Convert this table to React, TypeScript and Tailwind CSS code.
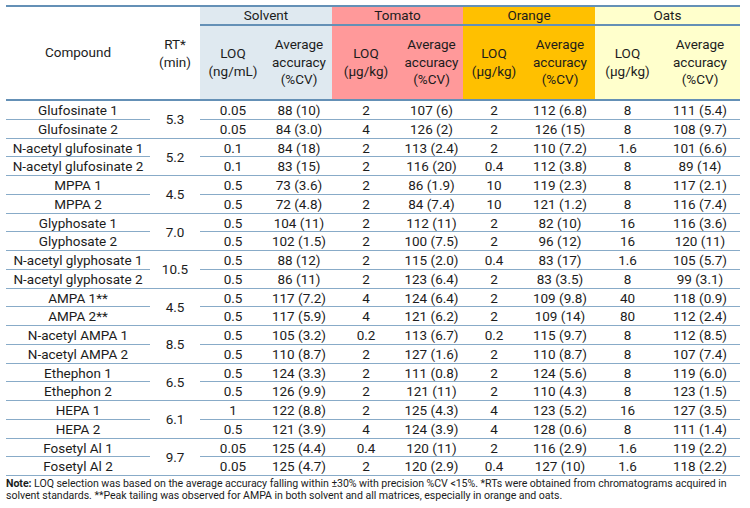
const groups = [
  { name: 'Solvent', bg: 'bg-[#dfe9f0]', loq: '(ng/mL)', w: ['w-[66px]', 'w-[66px]'] },
  { name: 'Tomato', bg: 'bg-[#ff999a]', loq: '(µg/kg)', w: ['w-[68px]', 'w-[63px]'] },
  { name: 'Orange', bg: 'bg-[#ffc000]', loq: '(µg/kg)', w: ['w-[62px]', 'w-[70px]'] },
  { name: 'Oats', bg: 'bg-[#ffffcc]', loq: '(µg/kg)', w: ['w-[65px]', 'w-[80px]'] },
];

const colW = ['w-[66px]', 'w-[66px]', 'w-[68px]', 'w-[63px]', 'w-[62px]', 'w-[70px]', 'w-[65px]', 'w-[80px]'];

type Row = [string, ...string[]];

const pairs: { rt: string; rows: [Row, Row] }[] = [
  { rt: '5.3', rows: [
    ['Glufosinate 1', '0.05', '88 (10)', '2', '107 (6)', '2', '112 (6.8)', '8', '111 (5.4)'],
    ['Glufosinate 2', '0.05', '84 (3.0)', '4', '126 (2)', '2', '126 (15)', '8', '108 (9.7)'],
  ] },
  { rt: '5.2', rows: [
    ['N-acetyl glufosinate 1', '0.1', '84 (18)', '2', '113 (2.4)', '2', '110 (7.2)', '1.6', '101 (6.6)'],
    ['N-acetyl glufosinate 2', '0.1', '83 (15)', '2', '116 (20)', '0.4', '112 (3.8)', '8', '89 (14)'],
  ] },
  { rt: '4.5', rows: [
    ['MPPA 1', '0.5', '73 (3.6)', '2', '86 (1.9)', '10', '119 (2.3)', '8', '117 (2.1)'],
    ['MPPA 2', '0.5', '72 (4.8)', '2', '84 (7.4)', '10', '121 (1.2)', '8', '116 (7.4)'],
  ] },
  { rt: '7.0', rows: [
    ['Glyphosate 1', '0.5', '104 (11)', '2', '112 (11)', '2', '82 (10)', '16', '116 (3.6)'],
    ['Glyphosate 2', '0.5', '102 (1.5)', '2', '100 (7.5)', '2', '96 (12)', '16', '120 (11)'],
  ] },
  { rt: '10.5', rows: [
    ['N-acetyl glyphosate 1', '0.5', '88 (12)', '2', '115 (2.0)', '0.4', '83 (17)', '1.6', '105 (5.7)'],
    ['N-acetyl glyphosate 2', '0.5', '86 (11)', '2', '123 (6.4)', '2', '83 (3.5)', '8', '99 (3.1)'],
  ] },
  { rt: '4.5', rows: [
    ['AMPA 1**', '0.5', '117 (7.2)', '4', '124 (6.4)', '2', '109 (9.8)', '40', '118 (0.9)'],
    ['AMPA 2**', '0.5', '117 (5.9)', '4', '121 (6.2)', '2', '109 (14)', '80', '112 (2.4)'],
  ] },
  { rt: '8.5', rows: [
    ['N-acetyl AMPA 1', '0.5', '105 (3.2)', '0.2', '113 (6.7)', '0.2', '115 (9.7)', '8', '112 (8.5)'],
    ['N-acetyl AMPA 2', '0.5', '110 (8.7)', '2', '127 (1.6)', '2', '110 (8.7)', '8', '107 (7.4)'],
  ] },
  { rt: '6.5', rows: [
    ['Ethephon 1', '0.5', '124 (3.3)', '2', '111 (0.8)', '2', '124 (5.6)', '8', '119 (6.0)'],
    ['Ethephon 2', '0.5', '126 (9.9)', '2', '121 (11)', '2', '110 (4.3)', '8', '123 (1.5)'],
  ] },
  { rt: '6.1', rows: [
    ['HEPA 1', '1', '122 (8.8)', '2', '125 (4.3)', '4', '123 (5.2)', '16', '127 (3.5)'],
    ['HEPA 2', '0.5', '121 (3.9)', '4', '124 (3.9)', '4', '128 (0.6)', '8', '111 (1.4)'],
  ] },
  { rt: '9.7', rows: [
    ['Fosetyl Al 1', '0.05', '125 (4.4)', '0.4', '120 (11)', '2', '116 (2.9)', '1.6', '119 (2.2)'],
    ['Fosetyl Al 2', '0.05', '125 (4.7)', '2', '120 (2.9)', '0.4', '127 (10)', '1.6', '118 (2.2)'],
  ] },
];

export default function App() {
  return (
    <div className="w-[750px] h-[508px] bg-white pt-[5px] pl-[6px] text-[#1c1c1c] font-['Roboto',sans-serif]">
      <div className="w-[734px] border-t-2 border-[#6490b6]">
        {/* header */}
        <div className="flex border-b-2 border-[#6490b6] text-[13.5px] leading-[17.5px]">
          <div className="w-[144px] flex items-center justify-center">Compound</div>
          <div className="w-[50px] flex flex-col items-center justify-center leading-[18px]">
            <span>RT*</span>
            <span>(min)</span>
          </div>
          {groups.map(g => (
            <div key={g.name} className={`flex flex-col ${g.bg}`}>
              <div className="h-[19px] flex items-center justify-center border-b-2 border-[#6490b6]">{g.name}</div>
              <div className="h-[73px] flex">
                <div className={`${g.w[0]} flex flex-col items-center justify-center`}>
                  <span>LOQ</span>
                  <span>{g.loq}</span>
                </div>
                <div className={`${g.w[1]} flex flex-col items-center justify-center`}>
                  <span>Average</span>
                  <span>accuracy</span>
                  <span>(%CV)</span>
                </div>
              </div>
            </div>
          ))}
        </div>

        {/* body */}
        {pairs.map((p, pi) => (
          <div key={pi} className="flex border-b border-[#88abc8] text-[13.5px]">
            <div className="w-[144px]">
              <div className="h-[18.5px] pt-[1px] flex items-center justify-center border-b border-[#88abc8]">{p.rows[0][0]}</div>
              <div className="h-[18px] pt-[1px] flex items-center justify-center">{p.rows[1][0]}</div>
            </div>
            <div className="w-[50px] flex items-center justify-center">{p.rt}</div>
            <div className="w-[540px]">
              {p.rows.map((r, ri) => (
                <div key={ri} className={`flex pt-[1px] ${ri === 0 ? 'h-[18.5px] border-b border-[#88abc8]' : 'h-[18px]'}`}>
                  {r.slice(1).map((v, ci) => (
                    <div key={ci} className={`${colW[ci]} flex items-center justify-center`}>{v}</div>
                  ))}
                </div>
              ))}
            </div>
          </div>
        ))}
      </div>

      <p className="mt-[2px] w-[740px] text-[10.6px] leading-[12px] tracking-[-0.05px]">
        <span className="font-bold">Note:</span> LOQ selection was based on the average accuracy falling within ±30% with precision %CV &lt;15%. *RTs were obtained from chromatograms acquired in solvent standards. **Peak tailing was observed for AMPA in both solvent and all matrices, especially in orange and oats.
      </p>
    </div>
  );
}
